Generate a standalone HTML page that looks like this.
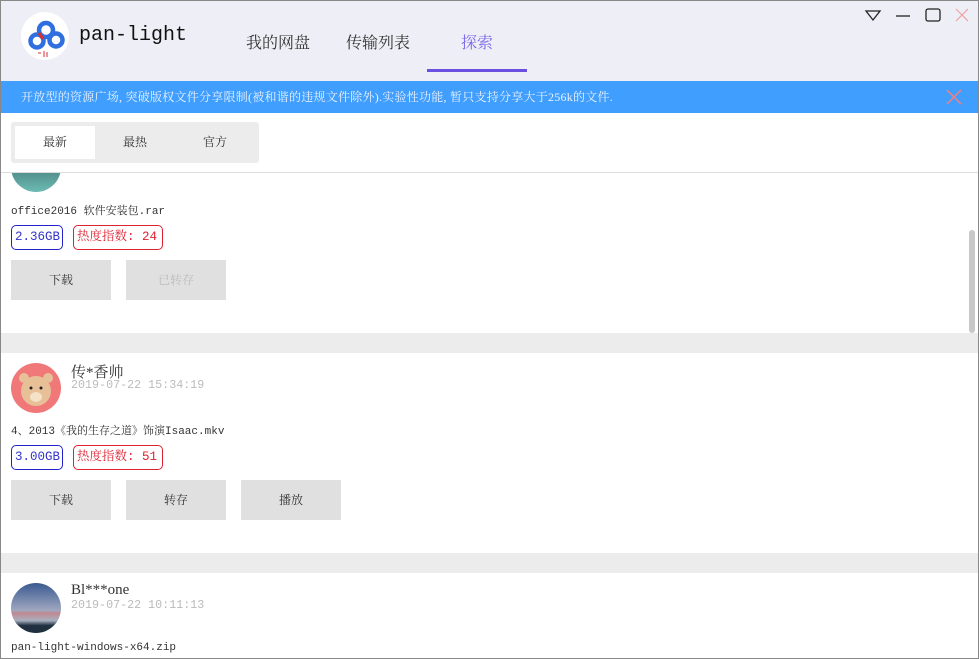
<!DOCTYPE html>
<html><head><meta charset="utf-8"><style>
*{margin:0;padding:0;box-sizing:border-box}
body{width:979px;height:659px;overflow:hidden;background:#fff;font-family:"Liberation Serif","Noto Serif CJK SC",serif;position:relative}
.abs{position:absolute}
.mono{font-family:"Liberation Mono","Noto Serif CJK SC",monospace}
.hdr{left:0;top:0;width:979px;height:81px;background:#eeeef6}
.nav{font-size:16px;color:#333;top:30px}
.banner{left:0;top:81px;width:979px;height:32px;background:#409eff;color:#e8f2ff;font-size:12px;line-height:32px;padding-left:21px;letter-spacing:0.25px}
.tabs{left:11px;top:122px;width:248px;height:41px;background:#ececec;border-radius:3px}
.tab{position:absolute;top:4px;height:33px;width:80px;line-height:33px;text-align:center;font-size:12px;color:#333}
.sep{left:0;width:979px;height:20px;background:#ececec}
.fn{left:11px;font-size:11px;color:#333}
.tag{height:25px;border-radius:5px;font-size:12.5px;line-height:23px;padding:0 3px;font-family:"Liberation Mono","Noto Serif CJK SC",monospace}
.tb{border:1px solid #2222cc;color:#3333cc;left:11px;width:52px}
.tr{border:1px solid #dd2233;color:#e02030;left:73px;width:90px}
.btn{width:100px;height:40px;background:#e0e0e0;font-size:12px;line-height:40px;text-align:center;color:#333}
.av{left:11px;width:50px;height:50px;border-radius:50%}
.nm{left:71px;font-size:15px;color:#333}
.dt{left:71px;font-size:11.7px;color:#bbb}
</style></head><body>
<div class="abs hdr"></div>
<div class="abs" style="left:21px;top:12px;width:48px;height:48px;border-radius:50%;background:#fff"></div>
<svg class="abs" style="left:21px;top:12px" width="48" height="48" viewBox="0 0 48 48"><circle cx="16" cy="29" r="6.5" fill="none" stroke="#2f6fe0" stroke-width="4.5"/><circle cx="25" cy="18" r="7" fill="none" stroke="#2f6fe0" stroke-width="4.5"/><circle cx="35" cy="28" r="6.5" fill="none" stroke="#2f6fe0" stroke-width="4.5"/><path d="M18 21l4 6" stroke="#d83030" stroke-width="3"/><path d="M17 41h3M23 39v6M26 40v5" stroke="#d03030" stroke-width="1"/></svg>
<div class="abs mono" style="left:79px;top:24px;font-size:20px;color:#111">pan-light</div>
<div class="abs nav" style="left:246px">我的网盘</div>
<div class="abs nav" style="left:346px">传输列表</div>
<div class="abs nav" style="left:461px;color:#7b68e8">探索</div>
<div class="abs" style="left:427px;top:69px;width:100px;height:3px;background:#6a4fe0"></div>
<svg class="abs" style="left:864px;top:8px" width="110" height="16"><path d="M2 3h14l-7 9z" fill="none" stroke="#222" stroke-width="1.3"/><path d="M32 8h14" stroke="#222" stroke-width="1.3"/><rect x="62" y="1" width="14" height="12" rx="2" fill="none" stroke="#222" stroke-width="1.3"/><path d="M92 1l12 12M104 1l-12 12" stroke="#f0a0a0" stroke-width="1.2"/></svg>
<div class="abs banner">开放型的资源广场, 突破版权文件分享限制(被和谐的违规文件除外).实验性功能, 暂只支持分享大于256k的文件.</div>
<svg class="abs" style="left:946px;top:89px" width="16" height="16"><path d="M1 1l14 14M15 1l-14 14" stroke="#f08080" stroke-width="1.5"/></svg>
<div class="abs tabs"><div class="tab" style="left:4px;background:#fff">最新</div><div class="tab" style="left:84px">最热</div><div class="tab" style="left:164px">官方</div></div>
<div class="abs" style="left:0;top:172px;width:979px;height:1px;background:#ddd"></div>
<div class="abs" style="left:0;top:173px;width:979px;height:486px;overflow:hidden">
<div class="abs av" style="top:-31px;background:linear-gradient(#2a4a50,#6cbcb4)"></div>
</div>
<div class="abs fn mono" style="top:202px">office2016 软件安装包.rar</div>
<div class="abs tag tb" style="top:225px">2.36GB</div>
<div class="abs tag tr" style="top:225px">热度指数: 24</div>
<div class="abs btn" style="left:11px;top:260px">下载</div>
<div class="abs btn" style="left:126px;top:260px;color:#bbb">已转存</div>
<div class="abs" style="left:969px;top:230px;width:6px;height:103px;background:#c8c8c8;border-radius:3px"></div>
<div class="abs sep" style="top:333px"></div>
<div class="abs av" style="top:363px;background:#f07878;overflow:hidden"><svg width="50" height="50"><circle cx="25" cy="28" r="15" fill="#e8c098"/><circle cx="13" cy="15" r="5" fill="#e8c098"/><circle cx="37" cy="15" r="5" fill="#e8c098"/><circle cx="20" cy="25" r="1.5" fill="#222"/><circle cx="30" cy="25" r="1.5" fill="#222"/><ellipse cx="25" cy="34" rx="6" ry="5" fill="#f5e0c8"/></svg></div>
<div class="abs nm" style="top:361px">传*香帅</div>
<div class="abs dt mono" style="top:378px">2019-07-22 15:34:19</div>
<div class="abs fn mono" style="top:422px">4、2013《我的生存之道》饰演Isaac.mkv</div>
<div class="abs tag tb" style="top:445px">3.00GB</div>
<div class="abs tag tr" style="top:445px">热度指数: 51</div>
<div class="abs btn" style="left:11px;top:480px">下载</div>
<div class="abs btn" style="left:126px;top:480px">转存</div>
<div class="abs btn" style="left:241px;top:480px">播放</div>
<div class="abs sep" style="top:553px"></div>
<div class="abs av" style="top:583px;background:linear-gradient(#3a5a90,#a0a8c0 55%,#c08890 60%,#a8b0c0 75%,#203040 85%)"></div>
<div class="abs nm" style="top:582px">Bl***one</div>
<div class="abs dt mono" style="top:598px">2019-07-22 10:11:13</div>
<div class="abs fn mono" style="top:642px">pan-light-windows-x64.zip</div>
<div class="abs" style="left:0;top:0;width:979px;height:659px;border:1px solid #888;pointer-events:none"></div>
</body></html>
